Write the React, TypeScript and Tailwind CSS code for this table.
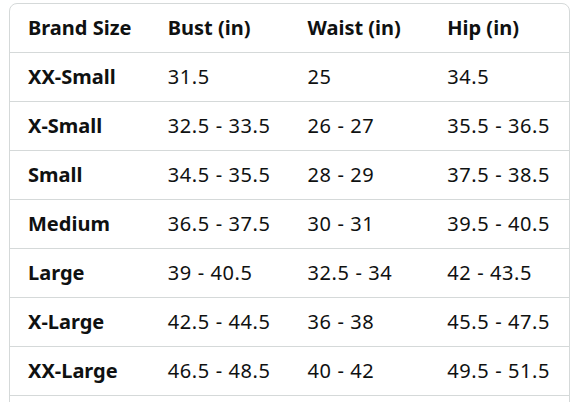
const rows = [
  ["XX-Small", "31.5", "25", "34.5"],
  ["X-Small", "32.5 - 33.5", "26 - 27", "35.5 - 36.5"],
  ["Small", "34.5 - 35.5", "28 - 29", "37.5 - 38.5"],
  ["Medium", "36.5 - 37.5", "30 - 31", "39.5 - 40.5"],
  ["Large", "39 - 40.5", "32.5 - 34", "42 - 43.5"],
  ["X-Large", "42.5 - 44.5", "36 - 38", "45.5 - 47.5"],
  ["XX-Large", "46.5 - 48.5", "40 - 42", "49.5 - 51.5"],
];

export default function App() {
  return (
    <div className="h-[402px] overflow-hidden bg-white pl-[9px] pt-[3px] font-['Noto_Sans',sans-serif] text-[20px] text-[#0f1111]">
      <div className="w-[561px] rounded-t-lg border border-[#d5d9d9]">
        <div className="grid h-12 grid-cols-4 items-center font-bold">
          <div className="pl-[18px]">Brand Size</div>
          <div className="pl-[18px]">Bust (in)</div>
          <div className="pl-[18px]">Waist (in)</div>
          <div className="pl-[18px]">Hip (in)</div>
        </div>
        {rows.map((r) => (
          <div key={r[0]} className="grid h-[49px] grid-cols-4 items-center border-t border-[#d5d9d9] tracking-[0.6px]">
            <div className="pl-[18px] font-bold tracking-normal">{r[0]}</div>
            <div className="pl-[18px]">{r[1]}</div>
            <div className="pl-[18px]">{r[2]}</div>
            <div className="pl-[18px]">{r[3]}</div>
          </div>
        ))}
        <div className="h-[49px] border-t border-[#d5d9d9]" />
      </div>
    </div>
  );
}
